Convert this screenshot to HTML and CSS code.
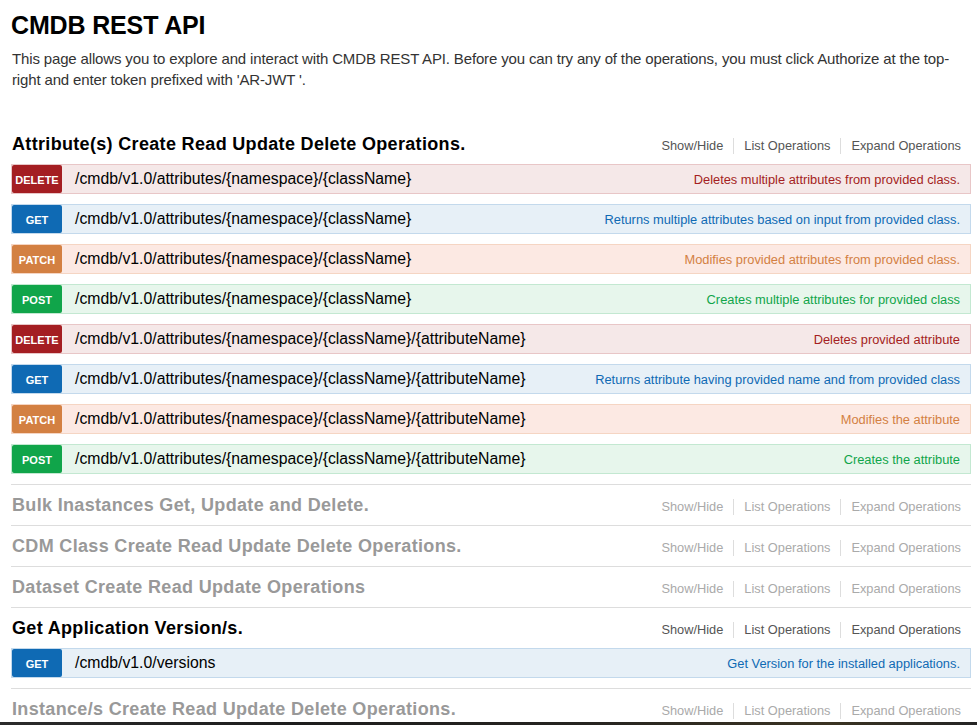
FILE: index.html
```html
<!DOCTYPE html>
<html lang="en">
<head>
<meta charset="utf-8">
<title>CMDB REST API</title>
<link rel="stylesheet" href="styles.css">
</head>
<body>
<div class="page">
  <header class="info">
    <h1 class="title">CMDB REST API</h1>
    <p class="desc">This page allows you to explore and interact with CMDB REST API. Before you can try any of the operations, you must click Authorize at the top-right and enter token prefixed with 'AR-JWT '.</p>
  </header>

  <ul class="resources">
    <li class="resource open">
      <div class="res-heading">
        <h2 class="res-title">Attribute(s) Create Read Update Delete Operations.</h2>
        <ul class="options">
          <li>Show/Hide</li>
          <li>List Operations</li>
          <li>Expand Operations</li>
        </ul>
      </div>
      <ul class="operations">
        <li class="op delete"><span class="method">DELETE</span><span class="path">/cmdb/v1.0/attributes/{namespace}/{className}</span><span class="summary">Deletes multiple attributes from provided class.</span></li>
        <li class="op get"><span class="method">GET</span><span class="path">/cmdb/v1.0/attributes/{namespace}/{className}</span><span class="summary">Returns multiple attributes based on input from provided class.</span></li>
        <li class="op patch"><span class="method">PATCH</span><span class="path">/cmdb/v1.0/attributes/{namespace}/{className}</span><span class="summary">Modifies provided attributes from provided class.</span></li>
        <li class="op post"><span class="method">POST</span><span class="path">/cmdb/v1.0/attributes/{namespace}/{className}</span><span class="summary">Creates multiple attributes for provided class</span></li>
        <li class="op delete"><span class="method">DELETE</span><span class="path">/cmdb/v1.0/attributes/{namespace}/{className}/{attributeName}</span><span class="summary">Deletes provided attribute</span></li>
        <li class="op get"><span class="method">GET</span><span class="path">/cmdb/v1.0/attributes/{namespace}/{className}/{attributeName}</span><span class="summary">Returns attribute having provided name and from provided class</span></li>
        <li class="op patch"><span class="method">PATCH</span><span class="path">/cmdb/v1.0/attributes/{namespace}/{className}/{attributeName}</span><span class="summary">Modifies the attribute</span></li>
        <li class="op post"><span class="method">POST</span><span class="path">/cmdb/v1.0/attributes/{namespace}/{className}/{attributeName}</span><span class="summary">Creates the attribute</span></li>
      </ul>
    </li>

    <li class="resource collapsed">
      <div class="res-heading">
        <h2 class="res-title">Bulk Inastances Get, Update and Delete.</h2>
        <ul class="options"><li>Show/Hide</li><li>List Operations</li><li>Expand Operations</li></ul>
      </div>
    </li>

    <li class="resource collapsed">
      <div class="res-heading">
        <h2 class="res-title">CDM Class Create Read Update Delete Operations.</h2>
        <ul class="options"><li>Show/Hide</li><li>List Operations</li><li>Expand Operations</li></ul>
      </div>
    </li>

    <li class="resource collapsed">
      <div class="res-heading">
        <h2 class="res-title">Dataset Create Read Update Operations</h2>
        <ul class="options"><li>Show/Hide</li><li>List Operations</li><li>Expand Operations</li></ul>
      </div>
    </li>

    <li class="resource open">
      <div class="res-heading">
        <h2 class="res-title">Get Application Version/s.</h2>
        <ul class="options"><li>Show/Hide</li><li>List Operations</li><li>Expand Operations</li></ul>
      </div>
      <ul class="operations">
        <li class="op get"><span class="method">GET</span><span class="path">/cmdb/v1.0/versions</span><span class="summary">Get Version for the installed applications.</span></li>
      </ul>
    </li>

    <li class="resource collapsed">
      <div class="res-heading">
        <h2 class="res-title">Instance/s Create Read Update Delete Operations.</h2>
        <ul class="options"><li>Show/Hide</li><li>List Operations</li><li>Expand Operations</li></ul>
      </div>
    </li>
  </ul>
</div>
<div class="screen-edge"></div>
</body>
</html>
```

FILE: styles.css
```css
* { box-sizing: border-box; }

html, body {
  margin: 0;
  padding: 0;
  background: #fff;
}

body {
  font-family: "Liberation Sans", Arial, sans-serif;
  color: #333;
}

.page {
  width: 960px;
  margin-left: 11px;
}

.info {
  padding-top: 10px;
}

.title {
  margin: 0;
  font-size: 25px;
  letter-spacing: -0.15px;
  line-height: 30px;
  font-weight: bold;
  color: #000;
}

.desc {
  margin: 8px 0 0 1px;
  font-size: 15px;
  letter-spacing: -0.15px;
  line-height: 21px;
  color: #333;
}

.resources {
  list-style: none;
  margin: 34px 0 0 0;
  padding: 0;
}

.resource {
  border-bottom: 1px solid #ddd;
}

.res-heading {
  display: flex;
  align-items: baseline;
  justify-content: space-between;
  height: 40px;
}

.res-title {
  margin: 0;
  padding-left: 1px;
  font-size: 18px;
  letter-spacing: 0.33px;
  line-height: 40px;
  font-weight: bold;
  color: #000;
}

.collapsed .res-title {
  color: #999;
}

.options {
  list-style: none;
  margin: 0;
  padding: 0;
  display: flex;
  align-items: baseline;
  font-size: 12.8px;
  color: #555;
}

.collapsed .options {
  color: #aaa;
}

.options li {
  padding: 0 10px;
  line-height: 16px;
  border-right: 1px solid #ddd;
}

.options li:last-child {
  border-right: 0;
}

.operations {
  list-style: none;
  margin: 0;
  padding: 0 0 10px 0;
  display: flex;
  flex-direction: column;
  gap: 10px;
}

.op {
  display: flex;
  align-items: baseline;
  height: 30px;
  border: 1px solid;
  font-size: 15.8px;
  line-height: 28px;
}

.method {
  flex: none;
  width: 50px;
  height: 28px;
  align-self: flex-start;
  padding-top: 2px;
  line-height: 26px;
  text-align: center;
  font-size: 11px;
  font-weight: bold;
  color: #fff;
  border-radius: 2px;
}

.path {
  margin-left: 13px;
  color: #000;
  white-space: nowrap;
}

.summary {
  margin-left: auto;
  padding-right: 10px;
  font-size: 12.85px;
  white-space: nowrap;
}

.op.delete { background: #f5e8e8; border-color: #e8c6c7; }
.op.delete .method { background: #a41e22; }
.op.delete .summary { color: #a41e22; }

.op.get { background: #e7f0f7; border-color: #c3d9ec; }
.op.get .method { background: #0f6ab4; }
.op.get .summary { color: #0f6ab4; }

.op.patch { background: #fce9e3; border-color: #f5d5c3; }
.op.patch .method { background: #d38042; }
.op.patch .summary { color: #d38042; }

.op.post { background: #e7f6ec; border-color: #c3e8d1; }
.op.post .method { background: #10a54a; }
.op.post .summary { color: #10a54a; }

.screen-edge {
  position: fixed;
  left: 0;
  right: 0;
  bottom: 0;
  height: 3px;
  background: linear-gradient(90deg, #2b2b2b 0%, #1d1d1d 30%, #262420 60%, #3a3322 85%, #242424 100%);
}
```
